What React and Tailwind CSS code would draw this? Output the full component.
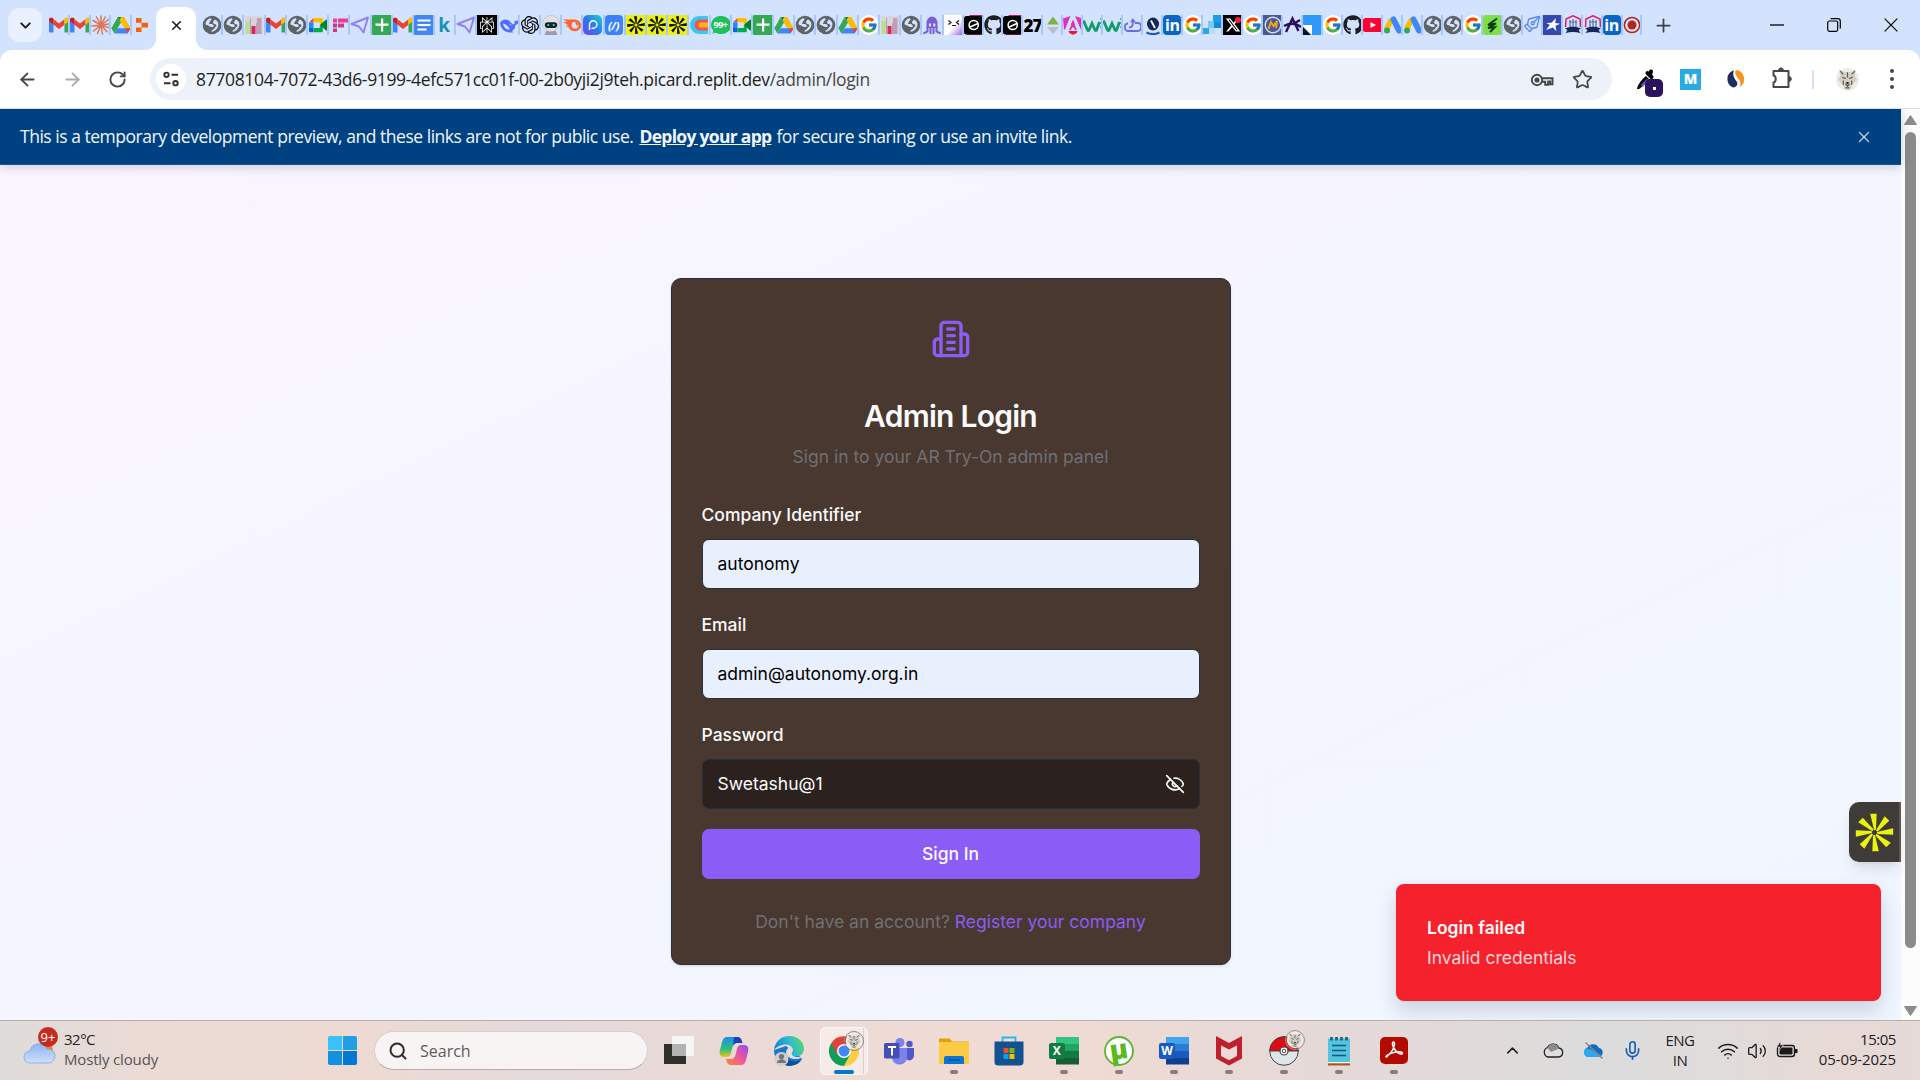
import React from "react";
import {
  ArrowLeft, ArrowRight, RotateCw, X, Plus, EyeOff, Star, ChevronDown, ChevronUp,
  Send, Mic, Wifi, Volume2, Search, PenTool,
} from "lucide-react";
import { FcGoogle } from "react-icons/fc";
import { FaGithub, FaWhatsapp } from "react-icons/fa";
import { FaXTwitter } from "react-icons/fa6";
import { SiOpenai, SiPerplexity } from "react-icons/si";

/* ---------- favicons ---------- */

const Svg = ({ children, className = "size-5", box = "0 0 20 20" }) => (
  <svg viewBox={box} className={`block shrink-0 ${className}`} fill="none">{children}</svg>
);

const Gmail = () => (
  <Svg>
    <path d="M0 5v11.2c0 .8.5 1.3 1.3 1.3H4.500V8.500z" fill="#4285f4" />
    <path d="M20 5v11.200c0 .8-.5 1.300-1.300 1.300H15.500V8.500z" fill="#34a853" />
    <path d="M4.500 4.300 10 8.500l5.500-4.200v5.400L10 13.900 4.500 9.700z" fill="#ea4335" />
    <path d="M0 4.500c0-2 2.200-2.700 3.600-1.600l.9.700v6.100L0 6.300z" fill="#c5221f" />
    <path d="M20 4.500c0-2-2.200-2.700-3.600-1.600l-.9.700v6.100L20 6.300z" fill="#fbbc04" />
  </Svg>
);

const Claude = () => (
  <Svg>
    <g stroke="#d97757" strokeWidth="1.500" strokeLinecap="round">
      <path d="M10 10V1M10 10l4.200-8M10 10l7.500-5.500M10 10l9-1.200M10 10l8.500 3M10 10l6 6.800M10 10l1.500 9M10 10l-3.500 8.500M10 10l-7.500 6M10 10l-9 1M10 10 2 5.500M10 10 5.500 2" />
    </g>
  </Svg>
);

const Drive = () => (
  <Svg>
    <path d="M6.800 2h6.400l6.500 11.200h-6.500z" fill="#fbbc04" />
    <path d="M6.800 2 10 7.600 3.500 18.500.3 13.200z" fill="#34a853" />
    <path d="M6.700 13.200h13l-3.200 5.300h-13z" fill="#4285f4" />
    <path d="M6.800 2h3.500L8.500 5z" fill="#188038" />
    <path d="M16.500 18.500l3.200-5.300h-5z" fill="#ea4335" />
  </Svg>
);

const Replit = () => (
  <Svg>
    <path d="M4 3h5.500v4.700H4zM9.500 7.700H16v4.700H9.500zM4 12.400h5.500V17H4z" fill="#f26207" />
  </Svg>
);

const Globe = () => (
  <Svg>
    <circle cx="10" cy="10" r="9.300" fill="#5f6368" />
    <path d="M3.500 9.500c-.2-3 2-5.700 5-6.300 1.500.2 1.300 1.800.2 2.400-.9.500-.4 1.600-1.500 2.100-.8.400.2 1.400 1 1.300 1.700-.2 3.300.2 3.600 1.700.1 1-.9 1.300-1.900 1.300-2.300 0-4.400-2.300-6.400-2.500z" fill="#d3e3fd" />
    <path d="M12 5c1.500-.8 3.500.8 4.300 3 .5 3-.8 6-3.300 7.500-1.200.8-2.300 1.200-3.500 1.200-.2-1.200.7-1.800 1.800-2.200 1.200-.5 1-1.800 2.200-2.500 1.400-.8 1.200-2.200-.2-2.700-1.200-.4-2.600-.8-2.300-2.200.2-.9 1.300-1 1-2.100z" fill="#d3e3fd" />
  </Svg>
);

const Bars = () => (
  <Svg>
    <path d="M1 1h18v18H1z" fill="#d8d5dc" />
    <path d="M1.500 6h4v13h-4z" fill="#b7e08a" />
    <path d="M7.500 11h4v8h-4z" fill="#e0245e" />
    <path d="M13 3h4.500v16H13z" fill="#c59bb8" />
    <path d="M6 3h1v16H6zM12 8h1v11h-1z" fill="#a9a6b3" />
  </Svg>
);

const Meet = () => (
  <Svg>
    <path d="M1 7.500 5.500 3v4.500z" fill="#ea4335" />
    <path d="M5.500 3h8c.8 0 1.300.5 1.300 1.300V10l-3-.5V7.300H5.500z" fill="#fbbc04" />
    <path d="M1 7.500h4.500v5.500H1z" fill="#2684fc" />
    <path d="M1 13h4.500v4.300H2.300C1.500 17.300 1 16.800 1 16z" fill="#0066da" />
    <path d="M5.500 13h6.300v-2l3-.8V16c0 .8-.5 1.300-1.300 1.300h-8z" fill="#00ac47" />
    <path d="m11.800 10 6-5.200c.7-.5 1.200-.3 1.200.5v9.600c0 .8-.6.900-1.200.4z" fill="#00832d" />
  </Svg>
);

const PinkF = () => (
  <Svg>
    <path d="M4 3.500h4v4H4zM9 3.500h10v4H9z" fill="#ea3d9b" />
    <path d="M4 8.500h4v4H4zM9 8.500h6v4H9zM4 13.500h4V17H4z" fill="#c93a86" />
  </Svg>
);

const Plane = () => (
  <Svg><path d="M18 2.500 13.500 17.500 9 11.500 1.500 9z" stroke="#8f7ff5" strokeWidth="1.900" strokeLinejoin="round" /></Svg>
);

const Sheets = () => (
  <Svg>
    <rect width="20" height="20" rx="1.500" fill="#34a853" />
    <path d="M9 3.500h2.200v13H9zM3.500 8.500h13v2.200h-13z" fill="#fff" />
  </Svg>
);

const Docs = () => (
  <Svg>
    <rect width="20" height="20" rx="1.500" fill="#4285f4" />
    <path d="M3.500 4.500h13v2h-13zM3.500 9h13v2h-13zM3.500 13.500h9v2h-9z" fill="#fff" />
  </Svg>
);

const Letter = ({ children, className }) => (
  <span className={`flex h-5 w-[18px] shrink-0 items-center justify-center font-['Open_Sans',sans-serif] leading-none ${className}`}>{children}</span>
);

const Perplexity = () => (
  <span className="flex size-5 items-center justify-center bg-black"><SiPerplexity className="size-4 text-white" /></span>
);

const Whale = () => (
  <Svg>
    <path d="M1 8c1.500-3 5-4.500 8-3 2 1 3.500 3.500 5 4.500 1.500-.2 2-1.500 1.500-4 1.500 1 3 .8 4-.8.3 3-1 5-3.300 5.500.2 3-1.500 5-3.500 5.800l2 1.200c-5 1.300-12.700-.7-13.700-9.200z" fill="#4d6bfe" />
    <path d="M4 8.500c3 .5 5.500 3 7 6-3.500.5-6.500-2-7-6zM9.500 8.500c1.500 0 2.800 1 3 2.500" fill="#d3e3fd" />
  </Svg>
);

const Robot = () => (
  <Svg>
    <path d="M5 16h10l1.500 4h-13z" fill="#9a9da3" />
    <ellipse cx="10" cy="8.500" rx="8.500" ry="8" fill="#dfe1e5" stroke="#b4b6bb" strokeWidth=".6" />
    <rect x="3.800" y="7.300" width="12.400" height="5.600" rx="2.800" fill="#14202c" />
    <circle cx="7.300" cy="10" r="1.100" fill="#35e0d8" /><circle cx="12.700" cy="10" r="1.100" fill="#35e0d8" />
  </Svg>
);

const Semrush = () => (
  <Svg>
    <path d="M1 4.500h11c4 0 7 2.300 7 5.800s-2.700 6-6.200 6c-3.300 0-5-1.800-5.800-3.800L3 10.700l3.300-.2C5 9 2.500 7.500.5 7.200l5-.3z" fill="#ff642d" />
    <circle cx="13" cy="10.200" r="3.400" fill="#d3e3fd" /><path d="M13 6.800a3.400 3.400 0 0 1 3.400 3.400h-2z" fill="#ff642d" />
  </Svg>
);

const PandaTile = () => (
  <Svg>
    <defs><linearGradient id="pp" x1="0" y1="1" x2="1" y2="0"><stop stopColor="#7a3ff2" /><stop offset=".5" stopColor="#2a7bf0" /><stop offset="1" stopColor="#1fd1c6" /></linearGradient></defs>
    <rect width="19" height="20" rx="5" fill="url(#pp)" />
    <path d="M6.500 15V9.500a3.700 3.700 0 1 1 3.700 3.700H8.500" stroke="#fff" strokeWidth="1.400" />
  </Svg>
);

const Burst = ({ fill = "#0c0c0c", className = "size-5", bg = "#eaf20e" }) => (
  <Svg className={className}>
    {bg && <path d="M0 0h20v20H0z" fill={bg} />}
    <g fill={fill}>
      {[0, 45, 90, 135, 180, 225, 270, 315].map((r) => (
        <path key={r} transform={`rotate(${r} 10 10)`} d="M8 1.300h3L10.700 8.600 9.800 8.900z" />
      ))}
    </g>
  </Svg>
);

const RoundC = () => (
  <Svg>
    <path d="M19 1h-9a9 9 0 0 0 0 18h9v-5h-9a4 4 0 0 1 0-8h9z" fill="#35c8f5" />
    <path d="M19 4.500h-8a5.500 5.500 0 0 0 0 11h8z" fill="#f7524c" />
    <path d="M19 7.500h-7a2.500 2.500 0 0 0 0 5h7z" fill="#ffb31a" />
  </Svg>
);

const WhatsApp = () => (
  <span className="relative flex size-5 items-center justify-center">
    <FaWhatsapp className="size-5 text-[#25d366]" />
    <span className="absolute inset-x-0 inset-y-px flex items-center justify-center rounded-full bg-[#1fbf5a] font-['Open_Sans',sans-serif] text-[9px] font-bold tracking-tighter text-white">99+</span>
  </span>
);

const Google = () => (
  <span className="flex size-5 items-center justify-center rounded-full bg-white"><FcGoogle className="size-[18px]" /></span>
);

const Octopus = () => (
  <Svg>
    <path d="M4.500 8a5.500 6.500 0 0 1 11 0v5H4.500z" fill="#7a5fd3" />
    <path d="M5.500 12v4.500L1.500 18.500M8.500 12v7M11.500 12v7M14.500 12v4.500l4 2" stroke="#7a5fd3" strokeWidth="2" />
    <path d="M7 8.500h2v3H7zM11.300 8.500h2v3h-2z" fill="#e8e2fb" />
  </Svg>
);

const Face = () => (
  <Svg>
    <defs><linearGradient id="fc" x1="0" y1="0" x2="1" y2="1"><stop offset=".55" stopColor="#fff" /><stop offset="1" stopColor="#9a5be0" /></linearGradient></defs>
    <path d="M0 0h19v20H0z" fill="url(#fc)" />
    <path d="m4.500 5.500 2.500 2-2.500 2M15 5.500l-2.500 2 2.500 2M8 10.500h4" stroke="#111" strokeWidth="1.200" />
  </Svg>
);

const DarkE = () => (
  <Svg>
    <path d="M0 6 6 0h13v20H3z" fill="#b9205a" />
    <rect x="0" y="1" width="18.500" height="18.500" rx="2.500" fill="#050505" />
    <circle cx="9.700" cy="10" r="4.600" stroke="#fff" strokeWidth="1.500" /><path d="m5 12.500 9.500-4.200" stroke="#fff" strokeWidth="1.500" />
  </Svg>
);

const Github = () => <FaGithub className="size-5 text-[#1b1f24]" />;

const Diamonds = () => (
  <Svg><path d="M10 1.500 16 9.500H4z" fill="#7cb342" /><path d="M10 19l6-7H4z" fill="#b4bfca" /></Svg>
);

const Angular = () => (
  <Svg>
    <path d="M0 3.500 7.500 1 2 14.500H1zM19.500 3.500 12 1l5.800 13.500h1zM10 4.500l2.300 5.500H7.700z" fill="#e02fc0" />
    <path d="M10 6 6 15h2l1-2.500h2l1 2.500h2z" fill="#e02fc0" />
    <path d="M5.500 16h9l-1 2.300-3.500 1.500-3.500-1.500z" fill="#f0133d" />
  </Svg>
);

const GreenW = () => (
  <Svg>
    <path d="M.5 5.500 4.500 15c.4.900 1.200.9 1.600 0L9 8.500l3 6.500c.4.900 1.200.9 1.600 0L16.500 7" stroke="#139c6b" strokeWidth="2.800" />
    <path d="M18 3v2M18 7v2M18 11v2" stroke="#139c6b" strokeWidth="1.200" />
  </Svg>
);

const Loop = () => (
  <Svg>
    <path d="M5 8.500c-4 0-4.500 7.500 0 7.500h9.500c4.800 0 4.800-8 .5-8h-3M6 12.500c3 0 4-1.500 4-5" stroke="#6a6af0" strokeWidth="1.800" />
    <path d="M7 7.500 9.800 3 13 7.500z" fill="#6a6af0" />
  </Svg>
);

const NavyCoin = () => (
  <Svg>
    <ellipse cx="10" cy="9" rx="6" ry="6.500" fill="#14265a" /><path d="M8 5.500 12 13" stroke="#fff" strokeWidth="1.800" />
    <path d="M3.500 17.500c4 2 9 2 13 0" stroke="#1b59b8" strokeWidth="2" />
  </Svg>
);

const LinkedIn = () => (
  <span className="flex h-5 w-[18px] items-center justify-center rounded-sm bg-[#0a66c2] font-['Open_Sans',sans-serif] text-[16px] leading-none font-bold tracking-tight text-white">in</span>
);

const Tiles = () => (
  <Svg>
    <path d="M10 0h9v7h-9z" fill="#1ba0e8" /><path d="M5 6h6v7H5z" fill="#7cc8f4" /><path d="M11 7h8v6h-8z" fill="#0f8bd8" />
    <path d="M0 13h6v6H0z" fill="#2aa6ec" /><path d="M6 13h6v6H6z" fill="#b4defa" />
  </Svg>
);

const XLogo = () => (
  <span className="relative flex size-5 items-center justify-center bg-black">
    <FaXTwitter className="size-4 text-white" />
    <span className="absolute top-0.5 right-0.5 size-1.5 rounded-full bg-[#f4212e]" />
  </span>
);

const MCoin = () => (
  <Svg>
    <path d="M0 0h20v20H0z" fill="#4a5a94" /><circle cx="10" cy="10" r="7.800" stroke="#d8dcec" strokeWidth="1.400" />
    <path d="M5.500 14 8 7l2.500 4L14 6l-1 7" stroke="#f4a31c" strokeWidth="2" />
  </Svg>
);

const InkA = () => (
  <Svg><path d="M3 17 9.500 3.500l6 12.500M1 11c6-3 12-3 17 1M12 8l5-3" stroke="#2a0f5c" strokeWidth="2.400" /></Svg>
);

const BlueCorner = () => (
  <Svg><path d="M0 0h19v20H9L0 9z" fill="#2f98fb" /><path d="M0 10h9v10z" fill="#fff" /><path d="M0 12v8h8z" fill="#04121f" /></Svg>
);

const YouTube = () => (
  <Svg><rect y="3" width="19" height="14" rx="2.500" fill="#ff0033" /><path d="m7.500 7 5.500 3-5.500 3z" fill="#fff" /></Svg>
);

const Ads = () => (
  <Svg>
    <path d="M8.500 4.500 3.500 14" stroke="#fbbc04" strokeWidth="5.500" />
    <path d="m10.500 4.500 5.500 11" stroke="#4285f4" strokeWidth="6" strokeLinecap="round" />
    <circle cx="4" cy="15.500" r="3" fill="#34a853" />
  </Svg>
);

const GreenBolt = () => (
  <Svg>
    <rect width="18.500" height="20" rx="2.500" fill="#7fe046" />
    <path d="M14 3.500 5 10l8-1.500L5 13l7-1-5 5" stroke="#0f3a12" strokeWidth="1.900" />
  </Svg>
);

const Quill = () => <PenTool className="size-[18px] rotate-90 text-[#5b8af0]" strokeWidth={1.8} />;

const StarTile = () => (
  <Svg>
    <path d="M0 0h19v20H0z" fill="#3448ae" />
    <path d="m13 3-.8 5 5 .8-4.700 1.900.9 5.500-3.500-3.600L3 15l3.800-4.900L3.500 8l5-.2z" fill="#fff" />
  </Svg>
);

const Crest = () => (
  <Svg>
    <path d="m2.500 12 .5-8 7-3.200L17 4l.5 8" stroke="#e01e5a" strokeWidth="1.500" />
    <path d="M7 5v8M10 4v9M13 5v8M6 7h8" stroke="#5b6b9a" strokeWidth="1.200" />
    <path d="M2 13.500c5-2.500 11-2.500 16 0l-2.500 1.500 2 3c-5-1.500-10-1.500-15 0l2-3z" fill="#14265a" />
  </Svg>
);

const Target = () => (
  <Svg><circle cx="9" cy="10" r="7.600" stroke="#b3261e" strokeWidth="1.500" /><circle cx="9" cy="10" r="4.500" fill="#b3261e" /></Svg>
);

const OpenAi = () => <SiOpenai className="size-5 p-px text-black" />;
const SmallK = () => <Letter className="text-[19px] font-bold text-[#1a8fb8]">k</Letter>;
const CodeTile = () => <Letter className="rounded-sm bg-[#3b82f6] text-[11px] font-bold tracking-tight text-white italic">(/)</Letter>;
const TwentySeven = () => <Letter className="text-[17px] font-extrabold tracking-[-1px] text-black">27</Letter>;

const LEFT_TABS = [Gmail, Gmail, Claude, Drive, Replit];
const WIDE_TABS = [
  Globe, Globe, Bars, Gmail, Globe, Meet, PinkF, Plane, Sheets, Gmail, Docs, SmallK, Plane, Perplexity, Whale,
  OpenAi, Robot, Semrush, PandaTile, CodeTile, Burst, Burst, Burst, RoundC, WhatsApp, Meet, Sheets, Drive, Globe,
  Globe, Drive, Google, Bars, Globe, Octopus,
];
const NARROW_TABS = [
  Face, DarkE, Github, DarkE, TwentySeven, Diamonds, Angular, GreenW, GreenW, Loop, NavyCoin, LinkedIn, Google,
  Tiles, XLogo, Google, MCoin, InkA, BlueCorner, Google, Github, YouTube, Ads, Ads, Globe, Globe, Google,
  GreenBolt, Globe, Quill, StarTile, Crest, Crest, LinkedIn, Target,
];

const Tab = ({ icon: Icon, width, last }) => (
  <div className={`flex h-5 shrink-0 ${width}`}>
    <div className="h-5 min-w-0 flex-1 overflow-x-clip"><div className="size-5"><Icon /></div></div>
    <div className={`h-5 w-0.5 shrink-0 ${last ? "" : "bg-[#a8c7fa]"}`} />
  </div>
);

/* ---------- browser chrome ---------- */

const TabStrip = () => (
  <header className="flex h-[50px] shrink-0 items-center bg-[#d3e3fd]">
    <button className="ml-2 flex h-[34px] w-[34px] items-center justify-center rounded-xl bg-[#e9f0fe]">
      <ChevronDown className="size-[17px] text-[#1f1f1f]" strokeWidth={2.8} />
    </button>
    <div className="ml-[7px] flex w-[107px]">
      {LEFT_TABS.map((I, i) => <Tab key={i} icon={I} width="w-[20.8px]" last={i === 4} />)}
    </div>
    <div className="relative flex h-[43px] w-10 items-center justify-center self-end rounded-t-[10px] bg-white pb-[7px]">
      <X className="size-[15px] text-[#1f1f1f]" strokeWidth={2.6} />
      <div className="absolute bottom-0 -left-3 size-3 bg-[radial-gradient(circle_at_0_0,transparent_12px,white_12.5px)]" />
      <div className="absolute -right-3 bottom-0 size-3 bg-[radial-gradient(circle_at_100%_0,transparent_12px,white_12.5px)]" />
    </div>
    <div className="ml-[6px] flex">
      {WIDE_TABS.map((I, i) => <Tab key={i} icon={I} width="w-[21.2px]" />)}
      {NARROW_TABS.map((I, i) => <Tab key={i} icon={I} width="w-[19.98px]" />)}
    </div>
    <Plus className="ml-[11px] size-[21px] text-[#3c4043]" strokeWidth={2} />
    <div className="mr-[22px] ml-auto flex items-center gap-[43px] text-black">
      <svg className="h-3.5 w-3.5" viewBox="0 0 14 14"><path d="M0 7h14" stroke="currentColor" strokeWidth="1.300" /></svg>
      <svg className="h-3.5 w-3.5" viewBox="0 0 14 14" fill="none" stroke="currentColor" strokeWidth="1.200">
        <rect x=".7" y="3" width="10" height="10.300" rx="1.800" /><path d="M3.500.7h7.200c1.500 0 2.600 1.100 2.600 2.600v7.200" />
      </svg>
      <svg className="h-3.5 w-3.5" viewBox="0 0 14 14"><path d="m.7.7 12.600 12.600M13.300.7.7 13.300" stroke="currentColor" strokeWidth="1.200" /></svg>
    </div>
  </header>
);

const Wolf = ({ className }) => (
  <svg viewBox="0 0 24 24" className={className}>
    <circle cx="12" cy="12" r="11" fill="#efece6" />
    <path d="M4 2.500 9 5h6l5-2.500-1 6 2 4-4 4-2.500 5h-5L7 16.500l-4-4 2-4z" fill="#d3cec6" />
    <path d="M5 4l3 3M19 4l-3 3M7 10l3.500 1M17 10l-3.500 1M10 16l2 2.500 2-2.500M8 13v4M16 13v4M12 5v5M10 20h4" stroke="#5f5a55" strokeWidth="1.100" fill="none" />
    <path d="M10.500 14.500h3L12 17z" fill="#222" />
  </svg>
);

const Toolbar = () => (
  <div className="h-[59px] shrink-0 bg-[#d3e3fd]">
    <div className="flex h-[59px] items-center rounded-t-xl border-b border-[#d9dce3] bg-white">
      <ArrowLeft className="ml-[17px] size-[21px] text-[#474747]" strokeWidth={2.1} />
      <ArrowRight className="ml-6 size-[21px] text-[#ababab]" strokeWidth={2.1} />
      <RotateCw className="ml-[25px] size-[19px] text-[#474747]" strokeWidth={2.4} />
      <div className="ml-[23px] flex h-[42px] w-[1462px] items-center rounded-full bg-[#ecf1fa] pl-[6px]">
        <div className="flex size-[30px] items-center justify-center rounded-full bg-white">
          <svg viewBox="0 0 18 18" className="size-[18px]" fill="none" stroke="#303030" strokeWidth="1.900">
            <circle cx="4.500" cy="4.800" r="2.200" /><path d="M9.500 4.800H16M2 13.200h6.500" /><circle cx="13.500" cy="13.200" r="2.200" />
          </svg>
        </div>
        <div className="ml-[10px] font-['Open_Sans',sans-serif] text-[17.5px] tracking-[-0.345px] whitespace-nowrap text-[#1f1f1f]">
          87708104-7072-43d6-9199-4efc571cc01f-00-2b0yji2j9teh.picard.replit.dev<span className="text-[#474747]">/admin/login</span>
        </div>
        <svg viewBox="0 0 24 14" className="mt-px ml-auto h-3.5 w-6" fill="none" stroke="#474747" strokeWidth="1.900">
          <circle cx="7" cy="7" r="5.200" /><circle cx="7" cy="7" r="1.600" fill="#474747" /><path d="M12 5.200h10.500v6h-2.300V8.500h-2v3.200h-3V8.700H12" />
        </svg>
        <Star className="mr-[19px] ml-[18px] size-[21px] text-[#474747]" strokeWidth={2} />
      </div>
      <div className="relative ml-[25px] h-[30px] w-[26px] translate-y-[3px]">
        <svg viewBox="0 0 26 30" className="h-[30px] w-[26px]">
          <path d="M0 22c0-4 6-11 9-13l3 3c-2 3-8 9-10 10z" fill="#0b0b0b" /><path d="m4 18 6-6 2 1-6 7z" fill="#7d4df0" />
          <path d="m10.500 6 4 4M13 7.500l1-3" stroke="#000" strokeWidth="4" strokeLinecap="round" />
        </svg>
        <span className="absolute right-0 bottom-0 flex h-[18px] w-[18px] items-center justify-center rounded-[5px] bg-[#2d1260]"><span className="size-[3px] bg-white" /></span>
      </div>
      <div className="ml-[17px] flex size-[21px] items-center justify-center bg-[#28abe2] font-['Open_Sans',sans-serif] text-[14px] leading-none font-extrabold text-white">M</div>
      <svg viewBox="0 0 20 20" className="ml-[25px] size-5">
        <path d="M8 1.200a9.200 9.200 0 0 0-1 17.300c4-.5 5.500-3.500 3.500-6.300S6 6 8 1.200z" fill="#1f2d5c" />
        <path d="M10 1a9.100 9.100 0 0 1 3.500 17c2.500-5-.5-7.500-2.500-10S8.500 2.500 10 1z" fill="#f7941d" />
      </svg>
      <svg viewBox="0 0 22 24" className="-mt-0.5 ml-[25px] h-6 w-[22px]" fill="none" stroke="#474747" strokeWidth="2">
        <path d="M2.500 5h15v16h-15v-4.500c3-.5 3-6.500 0-7z" strokeLinejoin="round" /><path d="M7.500 4.500c0-3.500 5-3.500 5 0zM18 10.500c3 0 3 5 0 5z" fill="#474747" strokeWidth="1" />
      </svg>
      <div className="ml-[19px] h-[19px] w-0.5 bg-[#d3e3fd]" />
      <Wolf className="ml-[21px] size-[25px]" />
      <div className="ml-[30px] flex flex-col gap-[4px]">
        {[0, 1, 2].map((i) => <span key={i} className="size-1 rounded-full bg-[#474747]" />)}
      </div>
    </div>
  </div>
);

/* ---------- page ---------- */

const Banner = () => (
  <div className="relative z-10 flex h-14 shrink-0 items-center border-b border-[#1d5591] bg-[#004182] pl-5 font-['Open_Sans',sans-serif] text-[17.5px] whitespace-nowrap text-[#f2f6fb] shadow-[0_2px_10px_rgba(0,0,0,0.18)]">
    <span className="tracking-[-0.475px]">This is a temporary development preview, and these links are not for public use.</span>
    <span className="ml-[6px] font-bold tracking-[-0.7px] underline">Deploy your app</span>
    <span className="ml-[5px] tracking-[-0.48px]">for secure sharing or use an invite link.</span>
    <X className="mr-[28px] ml-auto size-[18px] text-[#c3d2e3]" strokeWidth={1.6} />
  </div>
);

const Field = ({ label, value, dark }) => (
  <>
    <label className="flex h-[29px] items-center font-medium text-[#fafafa]">{label}</label>
    <div className={`mt-2.5 flex h-[50px] items-center justify-between rounded-[7px] border border-[#25303a] px-[15px] ${dark ? "bg-[#2b2220] text-[#fafafa]" : "bg-[#e8f0fe] text-black"}`}>
      <span className="pb-[2px]">{value}</span>
      {dark && <EyeOff className="-mr-px size-5 text-[#fafafa]" strokeWidth={2} />}
    </div>
  </>
);

const Building = () => (
  <svg viewBox="0 0 24 24" className="size-10" fill="none" stroke="#8b5cf6" strokeWidth="2" strokeLinecap="round" strokeLinejoin="round">
    <path d="M6 22V4a2 2 0 0 1 2-2h8a2 2 0 0 1 2 2v18Z" />
    <path d="M6 12H4a2 2 0 0 0-2 2v6a2 2 0 0 0 2 2h2" />
    <path d="M18 9h2a2 2 0 0 1 2 2v9a2 2 0 0 1-2 2h-2" />
    <path d="M10 6h4M10 10h4M10 14h4M10 18h4" />
  </svg>
);

const LoginCard = () => (
  <main className="mt-px flex h-[687px] w-[560px] flex-col rounded-[10px] border border-[#26323d] bg-[#49382f] px-[30px] pt-[30px] text-[17.5px] leading-[25px] shadow-sm">
    <div className="flex h-[60px] items-center justify-center"><Building /></div>
    <h1 className="mt-[27px] flex h-10 items-center justify-center text-[30px] font-semibold tracking-[-0.75px] text-[#fafafa]">Admin Login</h1>
    <p className="mt-2 mb-[31px] flex justify-center text-[#6f7074]">Sign in to your AR Try-On admin panel</p>
    <Field label="Company Identifier" value="autonomy" />
    <div className="h-[21px]" />
    <Field label="Email" value="admin@autonomy.org.in" />
    <div className="h-[21px]" />
    <Field label="Password" value="Swetashu@1" dark />
    <button className="mt-5 flex h-[50px] items-center justify-center rounded-[7px] bg-[#8b5cf6] pb-[2px] font-medium text-[#fafafa]">Sign In</button>
    <p className="mt-[30px] flex justify-center whitespace-pre text-[#6f7074]"><span>Don't have an account? <a className="text-[#8b5cf6]">Register your company</a></span></p>
  </main>
);

const Page = () => (
  <div className="relative flex h-[911px] shrink-0 overflow-hidden">
    <div className="flex w-[1901px] flex-col font-[Inter,sans-serif]">
      <Banner />
      <div className="flex h-[912px] shrink-0 items-center justify-center bg-gradient-to-br from-[#faf5ff] to-[#eff6ff]">
        <LoginCard />
      </div>
    </div>
    <div className="flex w-[19px] flex-col items-center bg-[#fcfcfc]">
      <svg viewBox="0 0 13 10" className="mt-[6px] h-2.5 w-[13px]"><path d="M6.500.5 12.500 9.500H.5z" fill="#8b8b8b" stroke="#8b8b8b" strokeLinejoin="round" /></svg>
      <div className="mt-[7px] h-[816px] w-[11px] rounded-full bg-[#8b8b8b]" />
      <svg viewBox="0 0 13 10" className="mt-[58px] h-2.5 w-[13px]"><path d="M6.500 9.500 12.500.5H.5z" fill="#8b8b8b" stroke="#8b8b8b" strokeLinejoin="round" /></svg>
    </div>
    <div className="absolute top-[693px] right-[19px] flex h-[60px] w-[52px] items-center rounded-l-[10px] border-r-2 border-[#5c5956] bg-[#3f3b38] pl-1 shadow-lg">
      <Burst bg={null} fill="#eaf20e" className="size-[43px]" />
    </div>
    <div className="absolute top-[775px] right-[39px] flex h-[117px] w-[485px] flex-col justify-center rounded-[8px] bg-[#f5212d] pl-[31px] font-[Inter,sans-serif] text-[17.5px] leading-[25px] text-[#fafafa] shadow-[0_10px_20px_rgba(40,50,80,0.18)]">
      <div className="font-semibold">Login failed</div>
      <div className="mt-[5px] text-[#fcd5d8]">Invalid credentials</div>
    </div>
  </div>
);

/* ---------- taskbar ---------- */

const Art = ({ children }) => <svg viewBox="0 0 30 30" className="size-[30px]" fill="none">{children}</svg>;

const TaskView = () => (
  <Art>
    <path d="M0 8h22v20H0z" fill="#2f2f2d" /><path d="M8 0h22v20H8z" fill="#f6f6f6" /><path d="M8 8h14v12H8z" fill="#b3b3b1" />
  </Art>
);
const Copilot = () => (
  <Art>
    <defs>
      <linearGradient id="cpa" x1="0" y1="0" x2="0" y2="1"><stop stopColor="#1b8ff0" /><stop offset=".6" stopColor="#2fbf7a" /><stop offset="1" stopColor="#f0c419" /></linearGradient>
      <linearGradient id="cpb" x1="1" y1="0" x2="0" y2="1"><stop stopColor="#8b4df5" /><stop offset=".5" stopColor="#f0569a" /><stop offset="1" stopColor="#f98b3c" /></linearGradient>
    </defs>
    <path d="M8 1h10c3 0 4 2 5 6h-5c-3 0-4 2-5 6l-1 4c-1 3-2 4-4 4H5c-4 0-5-3-4-7l2-8c1-3 2-5 5-5z" fill="url(#cpa)" />
    <path d="M15 1h4c2.500 0 3.500 2 4.500 6H18c-2 0-3 1-4 3z" fill="#1c3fbf" />
    <path d="M22 29H12c-3 0-4-2-5-6h5c3 0 4-2 5-6l1-4c1-3 2-4 4-4h3c4 0 5 3 4 7l-2 8c-1 3-2 5-5 5z" fill="url(#cpb)" />
  </Art>
);
const Edge = () => (
  <Art>
    <defs><linearGradient id="edg" x1="0" y1=".5" x2="1" y2=".2"><stop stopColor="#0c7fd4" /><stop offset=".5" stopColor="#2bb8d8" /><stop offset="1" stopColor="#5fdc5a" /></linearGradient></defs>
    <path d="M0 14c0 9 6 15.500 15 15.500 6 0 10.500-3 13-7.500L12 10z" fill="#1479c9" />
    <path d="M0 14C1 6 7 0 15 0c9 0 15 6 15 12.500 0 5-3.500 8-8 8-4 0-6-2-4-4 2-4-1-8-6-8-5.500 0-10 2.500-12 5.500z" fill="url(#edg)" />
    <path d="M12 17c0 6 6 10 12 8l4-2c-3 5-8 7-13 7-6 0-8-7-3-13z" fill="#0f4f9c" />
    <path d="M18 16.500c1.500-1.500 1-4-1-5.500-3 0-5 3-5 6 1 5 8 8 16 4.500 1-.5 2-2.500 2-3-2 2-5 2.500-7 2.500-4 0-6-2.500-5-4.500z" fill="#eddbd6" />
    <circle cx="7.500" cy="23" r="7" fill="#cfcfcf" /><circle cx="7.500" cy="20.500" r="2.600" fill="#757575" /><path d="M3 27c0-5 9-5 9 0z" fill="#757575" />
  </Art>
);
const Chrome = () => (
  <div className="relative flex h-12 w-12 items-center justify-center rounded-md border border-white/60 bg-[#f6ebe8]">
    <div className="absolute top-0 right-0 h-full w-1 rounded-r-md border-l border-[#dccfcb]" />
    <Art>
      <path d="M2 7.500A15 15 0 0 0 15 30l6.500-11.500L15 15z" fill="#0f9d58" />
      <path d="M28 7.500A15 15 0 0 1 15 30l6.500-11.500L15 8h13z" fill="#ffcd40" /><path d="M2 7.500 8.500 18.500 15 15V8h13A15 15 0 0 0 2 7.500z" fill="#db4437" />
      <circle cx="15" cy="15" r="7" fill="#fff" /><circle cx="15" cy="15" r="5.500" fill="#4285f4" />
    </Art>
    <Wolf className="absolute top-[3px] right-[3px] size-5 rounded-full border border-[#888]" />
  </div>
);
const Teams = () => (
  <Art>
    <circle cx="16" cy="6.500" r="4.500" fill="#7b83eb" /><circle cx="25.500" cy="8" r="3.200" fill="#5059c9" />
    <path d="M21 12h9v7c0 7-9 7-9 1z" fill="#5059c9" /><path d="M8 12h15v9c0 10-15 10-15 0z" fill="#7b83eb" />
    <rect y="7" width="15.500" height="15.500" rx="1.500" fill="#464eb8" /><path d="M4 11h8M8 11v8.500" stroke="#fff" strokeWidth="2" />
  </Art>
);
const Folder = () => (
  <Art>
    <path d="M0 2.500h11l2 3h17V9H0z" fill="#e3a008" /><path d="M0 6h30v22H0z" fill="#fccb45" />
    <path d="M5 28v-6c0-1 .5-2 2-2h16c1.500 0 2 1 2 2v6z" fill="#0d74d1" /><path d="M9 24h12" stroke="#0a4f96" strokeWidth="1.400" />
  </Art>
);
const Store = () => (
  <Art>
    <path d="M8.500 6V1.500h13V6" stroke="#22b8f0" strokeWidth="1.800" /><path d="M.5 5.500h29V26c0 2-1 3.500-3.500 3.500H4C1.500 29.500.5 28 .5 26z" fill="#13518f" />
    <path d="M9.500 12h5v5h-5z" fill="#f25022" /><path d="M15.500 12h5v5h-5z" fill="#7fba00" /><path d="M9.500 18h5v5h-5z" fill="#00a4ef" /><path d="M15.500 18h5v5h-5z" fill="#ffb900" />
  </Art>
);
const Office = ({ a, b, c, d, badge, letter }) => (
  <div className="relative size-[30px]">
    <Art>
      <path d="M7 1h23v7H7z" fill={a} /><path d="M7 8h23v7H7z" fill={b} /><path d="M7 15h23v7H7z" fill={c} /><path d="M7 22h23v6.500H7z" fill={d} />
    </Art>
    <span className={`absolute top-[7px] left-0 flex size-[16px] items-center justify-center rounded-[2px] font-['Open_Sans',sans-serif] text-[12px] leading-none font-bold text-white ${badge}`}>{letter}</span>
  </div>
);
const Torrent = () => (
  <div className="relative">
    <Art><circle cx="15" cy="15" r="14" fill="#fff" stroke="#5cb531" strokeWidth="1.800" /></Art>
    <span className="absolute inset-0 flex rotate-[-8deg] items-center justify-center pb-[6px] font-['Open_Sans',sans-serif] text-[27px] leading-none font-extrabold text-[#5cb81f]">µ</span>
  </div>
);
const McAfee = () => (
  <Art><path d="m2 0 13 7L28 0v22.500L15 29.500 2 22.500z" fill="#c01f2e" /><path d="m7 9.500 8 4 8-4V20l-8 4.300L7 20z" fill="#ebdad8" /></Art>
);
const Pokeball = () => (
  <div className="relative">
    <Art>
      <circle cx="15" cy="15" r="14.300" fill="#dfe6ea" stroke="#444" /><path d="M.700 15a14.300 14.300 0 0 1 28.600 0z" fill="#d90d12" stroke="#444" />
      <circle cx="15" cy="15" r="4" fill="#fff" stroke="#444" strokeWidth="1.200" /><circle cx="15" cy="15" r="1.800" stroke="#444" />
    </Art>
    <Wolf className="absolute -top-1.5 -right-1.5 size-5 rounded-full border border-[#999]" />
  </div>
);
const Notepad = () => (
  <Art>
    <path d="M4 2.500h22V28H4z" fill="#55c2e0" /><path d="M4 27h22v2.500H4z" fill="#a8581a" /><path d="M4 26h22v1.300H4z" fill="#f3f3f3" />
    <path d="M8 9.500h14M8 14.500h14M8 19.500h14" stroke="#0c5a7d" strokeWidth="1.700" /><path d="M7.500 1v3.500M12.500 1v3.500M17.500 1v3.500M22.500 1v3.500" stroke="#17617d" strokeWidth="2.600" />
  </Art>
);
const Acrobat = () => (
  <Art>
    <rect x="1" y="1" width="28" height="27" rx="5" fill="#b30b00" />
    <path d="M7 20.500c4-1.500 8-7.500 8.500-12.500.2-3-2.700-2.500-2 .5 1 4.500 4.500 9 8.500 9.500 2.500 0 1.500-2.300-1-2.300-5 0-10 1.500-13.300 3.800-1.500 1.300-.5 2 .3 1z" stroke="#fff" strokeWidth="1.500" />
  </Art>
);

const APPS = [
  [<TaskView />, 0], [<Copilot />, 0], [<Edge />, 0], [<Chrome />, 2], [<Teams />, 0], [<Folder />, 1], [<Store />, 0],
  [<Office a="#33c481" b="#21a366" c="#107c41" d="#185c37" badge="bg-[#107c41]" letter="X" />, 1],
  [<Torrent />, 1],
  [<Office a="#41a5ee" b="#2b7cd3" c="#185abd" d="#103f91" badge="bg-[#185abd]" letter="W" />, 1],
  [<McAfee />, 1], [<Pokeball />, 1], [<Notepad />, 1], [<Acrobat />, 1],
];
const MARKS = ["", "h-1 w-2 rounded-full bg-[#857e7c]", "h-1 w-5 rounded-full bg-[#0078d4]"];

const Taskbar = () => (
  <footer className="flex h-[60px] shrink-0 border-t border-[#b9b0ae] bg-[linear-gradient(90deg,#dedcda_0%,#ecdad4_8%,#ecdad3_20%,#e4dadb_28%,#e9d9d7_36%,#f0dcd5_50%,#f0dbd3_56%,#e8d9d6_64%,#e2dada_75%,#dcdcdc_84%,#e0dcda_90%,#e8d9d5_96%,#e4dad8_100%)] font-['Open_Sans',sans-serif] text-[15px] whitespace-nowrap text-[#222]">
    <div className="relative ml-[23px] flex w-[305px] items-center">
      <svg viewBox="0 0 34 36" className="-mt-2 h-9 w-[34px]">
        <defs><linearGradient id="cl" x1="0" y1="0" x2="0" y2="1"><stop stopColor="#8db4f2" /><stop offset="1" stopColor="#cfe0fb" /></linearGradient></defs>
        <circle cx="24" cy="21" r="6" fill="#f5821f" />
        <path d="M7 34a6 6 0 0 1 0-12 9 9 0 0 1 17-2 7 7 0 0 1 2 14z" fill="url(#cl)" stroke="#7ba4ea" strokeWidth=".8" />
      </svg>
      <span className="absolute top-[6px] left-[15px] flex size-5 items-center justify-center rounded-full bg-[#c42b1c] text-[13px] leading-none text-white">9+</span>
      <div className="-mt-[3px] ml-[7px] flex flex-col leading-5">
        <span className="tracking-[-0.5px]">32°C</span><span className="tracking-[-0.16px] text-[#555]">Mostly cloudy</span>
      </div>
    </div>
    <div className="flex items-center">
      <div className="grid size-[29px] grid-cols-2 gap-px overflow-hidden rounded-[2px]">
        <span className="bg-[#3cc0f8]" /><span className="bg-[#229de6]" /><span className="bg-[#1490e0]" /><span className="bg-[#0078d4]" />
      </div>
      <div className="ml-[17px] flex h-[39px] w-[274px] items-center rounded-full border border-[#d8cfcd] border-b-[#b5adab] bg-[#f8f4f3] pl-[13px] text-[16px] text-[#5c5c5c]">
        <Search className="size-5 text-[#2c2c2c]" strokeWidth={2.4} /><span className="ml-3">Search</span>
      </div>
    </div>
    <div className="ml-[3px] flex">
      {APPS.map(([icon, mark], i) => (
        <div key={i} className="relative flex w-[55.05px] items-center justify-center">
          {icon}
          <span className={`absolute bottom-[6px] left-1/2 -translate-x-1/2 ${MARKS[mark]}`} />
        </div>
      ))}
    </div>
    <div className="mr-6 ml-auto flex items-center">
      <ChevronUp className="size-[19px] text-[#1f1f1f]" strokeWidth={2} />
      <svg viewBox="0 0 22 16" className="-mt-0.5 ml-5 h-4 w-[22px]"><path d="M6 15a5 5 0 0 1-.5-9.500A6.500 6.500 0 0 1 17 6a4.600 4.600 0 0 1 0 9z" fill="#dedede" stroke="#222" strokeWidth="1.300" /><path d="M5.500 6A6 6 0 0 1 17 6.500L9 10z" fill="#8c8c8c" /></svg>
      <svg viewBox="0 0 22 18" className="-mt-0.5 ml-[18px] h-[18px] w-[22px]"><path d="M6 16a5 5 0 0 1-.5-9.500A6.500 6.500 0 0 1 17 7a4.600 4.600 0 0 1 0 9z" fill="#0f6cc4" /><path d="M6 16a5 5 0 0 1-2.500-8.500C8 6.500 14 12 20 14.500c-1 1-2 1.500-3 1.500z" fill="#2fa8f2" /><path d="m3.500 1.500 17 16" stroke="#8d8683" strokeWidth="1.500" /></svg>
      <Mic className="ml-[18px] size-[21px] text-[#1a5fb4]" strokeWidth={1.9} />
      <div className="-mt-[2px] ml-[21px] flex w-[32px] flex-col items-center leading-[20px]"><span className="tracking-[-0.5px]">ENG</span><span className="tracking-[-0.5px]">IN</span></div>
      <Wifi className="ml-[21px] size-[22px] text-[#1f1f1f]" strokeWidth={1.7} />
      <Volume2 className="ml-[8px] size-5 text-[#1f1f1f]" strokeWidth={1.6} />
      <svg viewBox="0 0 22 18" className="-mt-0.5 ml-[9px] h-[18px] w-[22px]"><rect x="1.500" y="4.500" width="17" height="11" rx="2.500" fill="none" stroke="#1a1a1a" strokeWidth="1.400" /><rect x="3.500" y="6.500" width="13" height="7" rx="1" fill="#1a1a1a" /><path d="M19 8h2.500v4H19z" fill="#1a1a1a" /><path d="M4.500 0 1 6h3L2.500 10.500 7.500 4h-3z" fill="#1a1a1a" stroke="#dcdad9" strokeWidth=".6" /></svg>
      <div className="-mt-[4px] ml-[20px] flex w-[78px] flex-col items-end leading-5"><span className="tracking-[-0.45px]">15:05</span><span className="tracking-[-0.1px]">05-09-2025</span></div>
    </div>
  </footer>
);

export default function App() {
  return (
    <div className="flex h-[1080px] w-[1920px] flex-col overflow-hidden">
      <TabStrip />
      <Toolbar />
      <Page />
      <Taskbar />
    </div>
  );
}
